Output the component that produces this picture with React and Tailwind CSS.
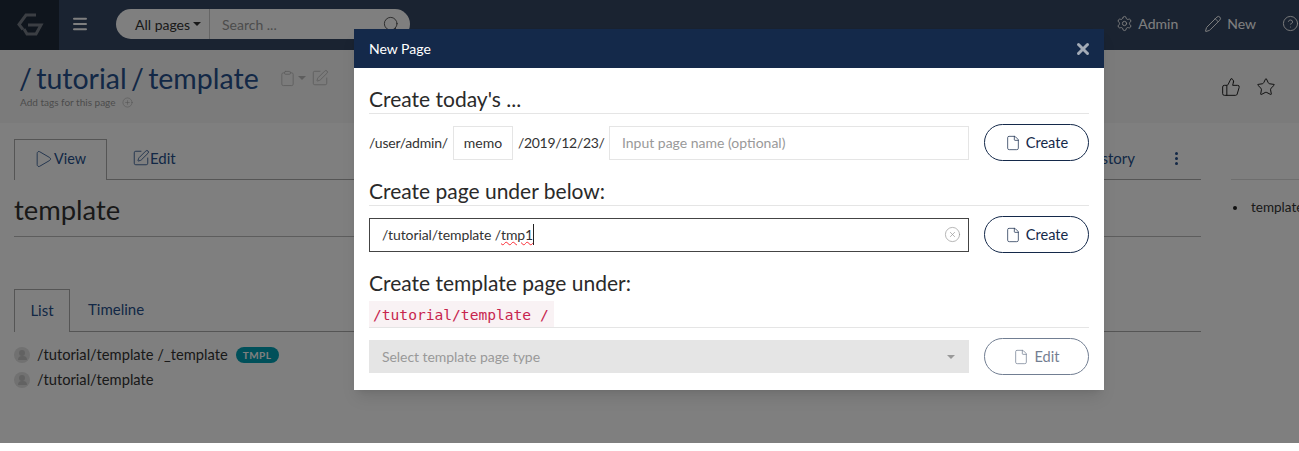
import { Settings, Pencil, CircleHelp, ThumbsUp, Star, Play, SquarePen, Clipboard, CirclePlus, File, CircleX, Menu, Search, X } from "lucide-react";

function Logo() {
  return (
    <svg width="28" height="26" viewBox="0 0 28 26" fill="none" stroke="#767d87" strokeWidth="3">
      <path d="M20 3H10L3 12.5l4 5" />
      <path d="M12 13h13l-5 9H11l-3-5" />
    </svg>
  );
}

function CreateButton({ label, disabled }) {
  return (
    <button
      className={`flex h-[37px] w-[105px] items-center justify-center gap-[5px] rounded-full border border-[#14294a] text-[14.6px] text-[#14294a] ${
        disabled ? "opacity-60" : ""
      }`}
    >
      <File size={16} strokeWidth={1.1} />
      {label}
    </button>
  );
}

function SectionTitle({ children }) {
  return <h3 className="border-b border-[#e5e5e5] pb-[1px] text-[21px] leading-[26px] text-[#2a2a2a]">{children}</h3>;
}

function Avatar() {
  return (
    <span className="flex h-4 w-4 flex-col items-center justify-center rounded-full bg-[#e2e2e2]">
      <span className="h-[6px] w-[6px] rounded-full bg-[#c4c4c4]" />
      <span className="h-[4px] w-[9px] rounded-t-full bg-[#c4c4c4]" />
    </span>
  );
}

function Background() {
  return (
    <div className="h-[443px] overflow-hidden bg-white">
      <nav className="flex h-[50px] items-center bg-[#344662] text-white">
        <div className="flex h-full w-[59px] items-center justify-center bg-[#1e2a3a]">
          <Logo />
        </div>
        <Menu size={18} strokeWidth={2.6} className="mb-[2px] ml-[12px]" />
        <div className="mb-[2px] ml-[27px] flex h-[30px] w-[294px] overflow-hidden rounded-full bg-white text-[14px]">
          <div className="flex w-[94px] items-center gap-[3px] border-r border-[#ccc] pl-[19px] text-[#333]">
            All pages
            <span className="border-x-[4px] border-t-[4px] border-x-transparent border-t-[#333]" />
          </div>
          <div className="flex flex-1 items-center justify-between pl-[12px] pr-[9px] text-[#999]">
            Search ...
            <Search size={19} strokeWidth={1.1} className="text-[#444]" />
          </div>
        </div>
        <div className="mb-[3px] ml-auto flex items-center text-[14px]">
          <Settings size={17} strokeWidth={1.3} className="mr-[5px]" />
          Admin
          <Pencil size={18} strokeWidth={1.3} className="ml-[26px] mr-[5px]" />
          New
          <CircleHelp size={17} strokeWidth={1.3} className="ml-[26px]" />
        </div>
      </nav>

      <header className="flex h-[73px] bg-[#f7f7f7] pl-[19px] pr-[23px]">
        <div className="pt-[9px]">
          <div className="flex items-center">
            <h1 className="text-[28.5px] leading-[38px] text-[#26508c] [word-spacing:-3px]">/ tutorial / template</h1>
            <Clipboard size={17} strokeWidth={1.2} className="ml-[20px] text-[#bbb]" />
            <span className="ml-[2px] border-x-[4px] border-t-[4px] border-x-transparent border-t-[#bbb]" />
            <SquarePen size={18} strokeWidth={1.2} className="ml-[5px] text-[#bbb]" />
          </div>
          <div className="-mt-[1px] flex items-center gap-[6px] pl-[1px] text-[10px] leading-[12px] text-[#999]">
            Add tags for this page
            <CirclePlus size={11} strokeWidth={1} />
          </div>
        </div>
        <div className="ml-auto flex items-start gap-[15px] pt-[27px] text-[#222]">
          <ThumbsUp size={20} strokeWidth={1.2} />
          <Star size={20} strokeWidth={1.2} />
        </div>
      </header>

      <div className="flex pl-[14px]">
        <main className="w-[1187px] shrink-0">
          <div className="mt-[16px] flex h-[41px] border-b border-[#aaa] text-[15px] text-[#26508c]">
            <div className="flex h-[41px] w-[93px] items-center gap-[1px] border border-b-0 border-[#aaa] bg-white pb-[2px] pl-[18px] text-[14.4px]">
              <Play size={20} strokeWidth={1} />
              View
            </div>
            <div className="flex items-center pb-[2px] pl-[25px]">
              <SquarePen size={18} strokeWidth={1.1} />
              Edit
            </div>
            <div className="ml-auto flex items-center pb-[2px] pr-[23px]">
              History
              <span className="ml-[40px] flex flex-col gap-[2px]">
                <span className="h-[3px] w-[3px] rounded-full bg-[#26508c]" />
                <span className="h-[3px] w-[3px] rounded-full bg-[#26508c]" />
                <span className="h-[3px] w-[3px] rounded-full bg-[#26508c]" />
              </span>
            </div>
          </div>
          <h2 className="h-[57px] border-b border-[#bbb] pt-[12px] text-[27.4px] leading-[35px] text-[#333]">template</h2>
          <div className="mt-[52px] flex h-[43px] border-b border-[#aaa] text-[15px] text-[#26508c]">
            <div className="flex h-[43px] w-[56px] items-center justify-center border border-b-0 border-[#aaa] bg-white pb-[2px]">List</div>
            <div className="flex items-center pb-[2px] pl-[18px]">Timeline</div>
          </div>
          <ul className="mt-[13px] flex flex-col gap-[6px] text-[14.7px] leading-[19px] text-[#333]">
            <li className="flex items-center gap-[7px]">
              <Avatar />
              /tutorial/template /_template
              <span className="ml-[1px] rounded-full bg-[#00a0b4] px-[7px] text-[10px] font-bold leading-[16px] tracking-[0.5px] text-white">TMPL</span>
            </li>
            <li className="flex items-center gap-[7px]">
              <Avatar />
              /tutorial/template
            </li>
          </ul>
        </main>
        <aside className="ml-[30px] mt-[56px] flex-1 border-t border-[#ddd] pt-[18px] text-[13.5px] leading-[19px] text-[#333]">
          <div className="flex items-center gap-[14px] whitespace-nowrap pl-[2px]">
            <span className="h-[4px] w-[4px] rounded-full bg-[#222]" />
            template
          </div>
        </aside>
      </div>
    </div>
  );
}

export default function App() {
  return (
    <div className="relative h-[451px] overflow-hidden bg-white font-['Lato',sans-serif]">
      <Background />
      <div className="absolute inset-x-0 top-0 h-[443px] bg-black/50" />

      <div className="absolute left-[354px] top-[29px] w-[750px] bg-white shadow-lg">
        <div className="flex h-[39px] items-center justify-between bg-[#14294a] px-[15px] text-[14px] text-white">
          New Page
          <X size={18} strokeWidth={4} className="-mr-[3px] text-[#a3abb7]" />
        </div>

        <div className="px-[15px] pb-[15px] pt-[18px]">
          <SectionTitle>Create today's ...</SectionTitle>
          <div className="mt-[10px] flex items-center text-[14px] text-[#333]">
            <span className="tracking-[-0.2px]">/user/admin/</span>
            <div className="ml-[5px] flex h-[34px] w-[60px] items-center justify-center border border-[#e5e5e5]">memo</div>
            <span className="ml-[5px] w-[86px] tracking-[-0.3px]">/2019/12/23/</span>
            <input
              className="ml-[5px] h-[34px] w-[360px] border border-[#e5e5e5] px-[12px] outline-none placeholder:text-[#999]"
              placeholder="Input page name (optional)"
            />
            <div className="ml-[15px]">
              <CreateButton label="Create" />
            </div>
          </div>

          <div className="mt-[17px]">
            <SectionTitle>Create page under below:</SectionTitle>
          </div>
          <div className="mt-[10px] flex items-center text-[14px] text-[#333]">
            <div className="flex h-[34px] w-[600px] items-center justify-between border border-[#444] pl-[12px] pr-[7px]">
              <span className="flex items-center tracking-[-0.1px]">
                /tutorial/template /
                <span className="border-r border-[#222] underline decoration-red-500 decoration-wavy decoration-1">tmp1</span>
              </span>
              <CircleX size={17} strokeWidth={1} className="text-[#999]" />
            </div>
            <div className="ml-[15px]">
              <CreateButton label="Create" />
            </div>
          </div>

          <h3 className="mt-[17px] text-[21px] leading-[26px] text-[#2a2a2a]">Create template page under:</h3>
          <div className="mt-[5px] border-b border-[#e5e5e5]">
            <code className="block h-[26px] w-[185px] whitespace-pre bg-[#f9f2f4] pl-[4px] font-['DejaVu_Sans_Mono',monospace] text-[14.6px] leading-[28px] text-[#c7254e]">
              /tutorial/template /
            </code>
          </div>
          <div className="mt-[10px] flex items-center text-[14px]">
            <div className="flex h-[33px] w-[600px] items-center justify-between bg-[#e5e5e5] pl-[13px] pr-[14px] text-[#999] tracking-[-0.05px]">
              Select template page type
              <span className="border-x-[4px] border-t-[4px] border-x-transparent border-t-[#999]" />
            </div>
            <div className="ml-[15px]">
              <CreateButton label="Edit" disabled />
            </div>
          </div>
        </div>
      </div>
    </div>
  );
}
